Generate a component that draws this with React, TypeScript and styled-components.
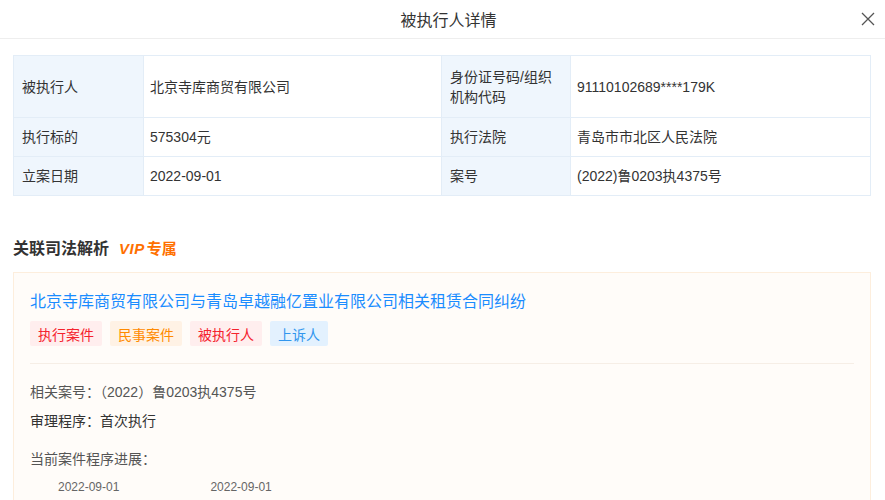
import React from "react";
import styled, { createGlobalStyle } from "styled-components";

const GlobalStyle = createGlobalStyle`
  html, body {
    margin: 0;
    padding: 0;
    background: #fff;
    font-family: "Liberation Sans", "Noto Sans CJK SC", sans-serif;
    color: #333;
  }
`;

const Page = styled.div`
  width: 885px;
  height: 500px;
  overflow: hidden;
  background: #fff;
`;

const Header = styled.header`
  position: relative;
  height: 39px;
  display: flex;
  align-items: center;
  justify-content: center;
  border-bottom: 1px solid #eeeeee;
  padding-left: 12px;
  box-sizing: border-box;
`;

const Title = styled.h1`
  margin: 0;
  font-size: 16px;
  font-weight: 400;
  color: #333;
`;

const Close = styled.button`
  position: absolute;
  right: 8px;
  top: 10px;
  width: 18px;
  height: 18px;
  padding: 0;
  border: 0;
  background: none;
  display: flex;
  align-items: center;
  justify-content: center;
  cursor: pointer;
`;

const Body = styled.main`
  padding: 16px 14px 0 13px;
`;

const InfoTable = styled.table`
  width: 858px;
  border-collapse: collapse;
  table-layout: fixed;
  font-size: 14px;
`;

const Cell = styled.td<{ $label?: boolean; $tall?: boolean }>`
  border: 1px solid #e3edf7;
  background: ${(p) => (p.$label ? "#eff6fd" : "#fff")};
  color: #333;
  height: ${(p) => (p.$tall ? "62px" : "39px")};
  padding: 0 7px 0 ${(p) => (p.$label ? 8 : 6)}px;
  line-height: 20px;
  vertical-align: middle;
  box-sizing: border-box;
`;

const SectionTitle = styled.h2`
  margin: 42px 0 12px;
  display: flex;
  align-items: center;
  gap: 10px;
  font-size: 16px;
  font-weight: 700;
  line-height: 22px;
  color: #333;
`;

const Vip = styled.span`
  color: #ff7000;
  font-size: 15px;
  font-weight: 700;
  display: flex;
  align-items: baseline;

  em {
    font-style: italic;
    font-weight: 900;
    margin-right: 2px;
    letter-spacing: 0.5px;
  }
`;

const Card = styled.section`
  width: 858px;
  box-sizing: border-box;
  background: #fffcf9;
  border: 1px solid #fdeedd;
  padding: 18px 16px 40px;
`;

const CaseTitle = styled.div`
  font-size: 16px;
  line-height: 22px;
  color: #1a8cff;
`;

const Tags = styled.div`
  display: flex;
  gap: 8px;
  margin-top: 8px;
`;

const tagColors = {
  red: { fg: "#f5222d", bg: "#ffeeee" },
  orange: { fg: "#ff8a00", bg: "#fff2e5" },
  blue: { fg: "#3196ee", bg: "#e3f1fe" },
};

const Tag = styled.span<{ $tone: keyof typeof tagColors }>`
  display: inline-flex;
  align-items: center;
  height: 25px;
  padding: 0 8px;
  border-radius: 2px;
  font-size: 14px;
  color: ${(p) => tagColors[p.$tone].fg};
  background: ${(p) => tagColors[p.$tone].bg};
`;

const Divider = styled.hr`
  margin: 17px 0 0;
  border: 0;
  border-top: 1px solid #f6eee6;
`;

const Line = styled.p<{ $gap: number; $muted?: boolean }>`
  margin: ${(p) => p.$gap}px 0 0;
  font-size: 14px;
  line-height: 20px;
  color: ${(p) => (p.$muted ? "#555" : "#333")};
`;

const Timeline = styled.div`
  display: flex;
  gap: 91px;
  margin-top: 9px;
  padding-left: 28px;
  font-size: 12px;
  line-height: 18px;
  color: #666;
`;

const rows = [
  ["被执行人", "北京寺库商贸有限公司", "身份证号码/组织机构代码", "91110102689****179K"],
  ["执行标的", "575304元", "执行法院", "青岛市市北区人民法院"],
  ["立案日期", "2022-09-01", "案号", "(2022)鲁0203执4375号"],
];

export default function App() {
  return (
    <Page>
      <GlobalStyle />
      <Header>
        <Title>被执行人详情</Title>
        <Close aria-label="关闭">
          <svg width="14" height="14" viewBox="0 0 14 14">
            <path d="M1 1 L13 13 M13 1 L1 13" stroke="#555" strokeWidth="1.3" fill="none" />
          </svg>
        </Close>
      </Header>
      <Body>
        <InfoTable>
          <colgroup>
            <col style={{ width: 130 }} />
            <col style={{ width: 298 }} />
            <col style={{ width: 129 }} />
            <col />
          </colgroup>
          <tbody>
            {rows.map((r, i) => (
              <tr key={i}>
                <Cell $label $tall={i === 0}>{r[0]}</Cell>
                <Cell $tall={i === 0}>{r[1]}</Cell>
                <Cell $label $tall={i === 0}>{r[2]}</Cell>
                <Cell $tall={i === 0}>{r[3]}</Cell>
              </tr>
            ))}
          </tbody>
        </InfoTable>

        <SectionTitle>
          关联司法解析
          <Vip>
            <em>VIP</em>专属
          </Vip>
        </SectionTitle>

        <Card>
          <CaseTitle>北京寺库商贸有限公司与青岛卓越融亿置业有限公司相关租赁合同纠纷</CaseTitle>
          <Tags>
            <Tag $tone="red">执行案件</Tag>
            <Tag $tone="orange">民事案件</Tag>
            <Tag $tone="red">被执行人</Tag>
            <Tag $tone="blue">上诉人</Tag>
          </Tags>
          <Divider />
          <Line $gap={18} $muted>
            相关案号：（2022）鲁0203执4375号
          </Line>
          <Line $gap={9}>审理程序：首次执行</Line>
          <Line $gap={18} $muted>
            当前案件程序进展：
          </Line>
          <Timeline>
            <span>2022-09-01</span>
            <span>2022-09-01</span>
          </Timeline>
        </Card>
      </Body>
    </Page>
  );
}
